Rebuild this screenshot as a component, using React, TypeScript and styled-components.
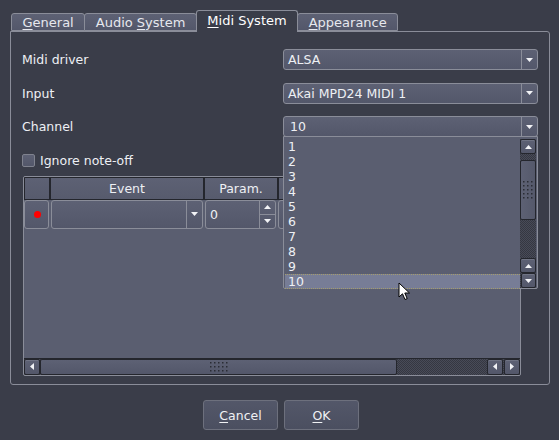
import React from "react";
import styled, { createGlobalStyle } from "styled-components";

const light = "#8a8d99";
const dark = "#24262d";
const fill = "linear-gradient(#5d6174, #53576a)";
const hatch = "repeating-conic-gradient(#484b58 0 25%, #353741 0 50%) 0 0 / 2px 2px";

const GlobalStyle = createGlobalStyle`
  html, body {
    margin: 0;
    padding: 0;
    background: #3a3d49;
  }
  body {
    font-family: "DejaVu Sans", "Liberation Sans", sans-serif;
    font-size: 12.5px;
    color: #eef0f4;
  }
`;

type Dir = "up" | "down" | "left" | "right";

const Tri = ({ dir }: { dir: Dir }) => {
  const horiz = dir === "left" || dir === "right";
  const pts = {
    down: "0,0 7,0 3.5,4",
    up: "0,4 7,4 3.5,0",
    left: "4,0 4,7 0,3.5",
    right: "0,0 0,7 4,3.5",
  }[dir];
  return (
    <svg width={horiz ? 4 : 7} height={horiz ? 7 : 4} viewBox={horiz ? "0 0 4 7" : "0 0 7 4"}>
      <polygon points={pts} fill="#f2f3f6" />
    </svg>
  );
};

const Grip = ({ cols, rows }: { cols: number; rows: number }) => (
  <svg width={cols * 4 - 2} height={rows * 4 - 2}>
    {Array.from(Array(rows).keys()).map((r) =>
      Array.from(Array(cols).keys()).map((c) => (
        <rect key={`${r}-${c}`} x={c * 4} y={r * 4} width={1.5} height={1.5} fill="#2a2c34" />
      ))
    )}
  </svg>
);

const Cursor = () => (
  <CursorWrap>
    <svg width="14" height="20" viewBox="0 0 14 20">
      <path d="M1,1 L1,15 L4.5,11.8 L7,17.5 L9.2,16.6 L6.8,11 L11.5,11 Z" fill="#fff" stroke="#000" strokeWidth="1" />
    </svg>
  </CursorWrap>
);

const channels = Array.from(Array(10).keys()).map((i) => `${i + 1}`);

export default function App() {
  return (
    <>
      <GlobalStyle />
      <Dialog>
        <TabBar>
          <Tab><span><Mn>G</Mn>eneral</span></Tab>
          <Tab><span>Audio <Mn>S</Mn>ystem</span></Tab>
          <Tab $active><span><Mn>M</Mn>idi System</span></Tab>
          <Tab><span><Mn>A</Mn>ppearance</span></Tab>
        </TabBar>

        <Panel>
          <Form>
            <Label>Midi driver</Label>
            <Combo>
              <ComboText>ALSA</ComboText>
              <ComboButton><Tri dir="down" /></ComboButton>
            </Combo>

            <Label>Input</Label>
            <Combo>
              <ComboText>Akai MPD24 MIDI 1</ComboText>
              <ComboButton><Tri dir="down" /></ComboButton>
            </Combo>

            <Label>Channel</Label>
            <Combo>
              <ComboText $indent={6}>10</ComboText>
              <ComboButton><Tri dir="down" /></ComboButton>
              <Popup>
                <List>
                  {channels.map((c) => (
                    <Item key={c} $selected={c === "10"}>{c}</Item>
                  ))}
                </List>
                <VScroll>
                  <ScrollBtn $h={15}><Tri dir="up" /></ScrollBtn>
                  <Hatch $size={6} />
                  <VThumb><Grip cols={3} rows={5} /></VThumb>
                  <Hatch />
                  <ScrollBtn $h={15}><Tri dir="up" /></ScrollBtn>
                  <ScrollBtn $h={15}><Tri dir="down" /></ScrollBtn>
                </VScroll>
              </Popup>
            </Combo>
          </Form>

          <CheckRow>
            <CheckBox />
            <span>Ignore note-off</span>
          </CheckRow>

          <Table>
            <TableHead>
              <HeadCell $w={27} $first />
              <HeadCell $w={154}>Event</HeadCell>
              <HeadCell $w={74}>Param.</HeadCell>
              <HeadCell $w={200}>Value</HeadCell>
            </TableHead>
            <TableRow>
              <RowButton><Dot /></RowButton>
              <Combo $w={152}>
                <ComboText />
                <ComboButton><Tri dir="down" /></ComboButton>
              </Combo>
              <Spin>
                <ComboText>0</ComboText>
                <SpinButtons>
                  <SpinHalf><Tri dir="up" /></SpinHalf>
                  <SpinHalf><Tri dir="down" /></SpinHalf>
                </SpinButtons>
              </Spin>
              <Combo $w={200}>
                <ComboText />
              </Combo>
            </TableRow>
            <TableSpace />
            <HScroll>
              <ScrollBtn $w={16}><Tri dir="left" /></ScrollBtn>
              <HThumb><Grip cols={5} rows={3} /></HThumb>
              <Hatch />
              <ScrollBtn $w={16}><Tri dir="left" /></ScrollBtn>
              <ScrollBtn $w={16}><Tri dir="right" /></ScrollBtn>
            </HScroll>
          </Table>
        </Panel>

        <ButtonRow>
          <Button><span><Mn>C</Mn>ancel</span></Button>
          <Button><span><Mn>O</Mn>K</span></Button>
        </ButtonRow>

        <Cursor />
      </Dialog>
    </>
  );
}

const Dialog = styled.div`
  position: relative;
  width: 559px;
  height: 440px;
  box-sizing: border-box;
  padding: 10px 9px 0 10px;
  overflow: hidden;
`;

const Mn = styled.span`
  text-decoration: underline;
  text-underline-offset: 2px;
`;

const TabBar = styled.div`
  position: relative;
  z-index: 1;
  display: flex;
  align-items: flex-end;
  height: 21px;
  padding-left: 1px;
  font-size: 13px;
`;

const Tab = styled.div<{ $active?: boolean }>`
  box-sizing: border-box;
  height: ${(p) => (p.$active ? 22 : 18)}px;
  margin-bottom: ${(p) => (p.$active ? -1 : 0)}px;
  display: flex;
  align-items: center;
  padding: 0 10.5px ${(p) => (p.$active ? 2 : 0)}px;
  border: 1px solid ${light};
  border-bottom: ${(p) => (p.$active ? "none" : `1px solid ${light}`)};
  border-radius: 3px 3px 0 0;
  background: ${(p) => (p.$active ? "#3a3d49" : fill)};
  color: ${(p) => (p.$active ? "#ffffff" : "#e6e8ee")};
  white-space: nowrap;

  & + & {
    margin-left: -1px;
  }
`;

const Panel = styled.div`
  box-sizing: border-box;
  width: 540px;
  height: 354px;
  border: 1px solid ${light};
  border-radius: 0 3px 3px 3px;
  padding: 17px 11px 0 11px;
  display: flex;
  flex-direction: column;
`;

const Form = styled.div`
  display: grid;
  grid-template-columns: 261px 255px;
  grid-template-rows: 21px 21px 21px;
  row-gap: 12.5px;
  align-items: center;
`;

const Label = styled.div`
  line-height: 21px;
`;

const Combo = styled.div<{ $w?: number }>`
  position: relative;
  box-sizing: border-box;
  ${(p) => (p.$w ? `width: ${p.$w}px; flex-shrink: 0;` : "")}
  height: 100%;
  display: flex;
  border: 1px solid ${light};
  border-radius: 3px;
  background: ${fill};
`;

const ComboText = styled.div<{ $indent?: number }>`
  flex: 1;
  display: flex;
  align-items: center;
  padding-left: ${(p) => p.$indent ?? 4}px;
  white-space: nowrap;
  overflow: hidden;
`;

const ComboButton = styled.div`
  width: 15px;
  border-left: 1px solid ${light};
  display: flex;
  align-items: center;
  justify-content: center;
`;

const Popup = styled.div`
  position: absolute;
  z-index: 5;
  top: 100%;
  left: -1px;
  width: 255px;
  height: 153px;
  box-sizing: border-box;
  border: 1px solid ${light};
  border-radius: 0 0 2px 2px;
  background: #5a5e70;
  padding: 2px 1px 0 1px;
  display: flex;
`;

const List = styled.div`
  flex: 1;
  display: flex;
  flex-direction: column;
`;

const Item = styled.div<{ $selected?: boolean }>`
  box-sizing: border-box;
  height: 15px;
  padding-left: 3px;
  display: flex;
  align-items: center;
  background: ${(p) => (p.$selected ? "#777d96" : "transparent")};
  border-top: 1px dotted ${(p) => (p.$selected ? "#a59d6c" : "transparent")};
  border-bottom: 1px dotted ${(p) => (p.$selected ? "#a59d6c" : "transparent")};
`;

const VScroll = styled.div`
  width: 16px;
  display: flex;
  flex-direction: column;
  background: ${hatch};
`;

const ScrollBtn = styled.div<{ $w?: number; $h?: number }>`
  box-sizing: border-box;
  flex-shrink: 0;
  ${(p) => (p.$w ? `width: ${p.$w}px;` : "")}
  ${(p) => (p.$h ? `height: ${p.$h}px;` : "")}
  border: 1px solid ${dark};
  border-radius: 2px;
  background: ${fill};
  box-shadow: inset 0 1px 0 rgba(255, 255, 255, 0.12);
  display: flex;
  align-items: center;
  justify-content: center;

  & + & {
    margin-left: ${(p) => (p.$w ? 1 : 0)}px;
  }
`;

const Hatch = styled.div<{ $size?: number }>`
  ${(p) => (p.$size ? `flex: 0 0 ${p.$size}px;` : "flex: 1;")}
  background: ${hatch};
`;

const VThumb = styled.div`
  box-sizing: border-box;
  height: 60px;
  flex-shrink: 0;
  border: 1px solid ${dark};
  border-radius: 2px;
  background: linear-gradient(90deg, #5d6174, #55596b);
  display: flex;
  align-items: center;
  justify-content: center;
`;

const HThumb = styled.div`
  box-sizing: border-box;
  width: 357px;
  flex-shrink: 0;
  border: 1px solid ${dark};
  border-radius: 2px;
  background: ${fill};
  display: flex;
  align-items: center;
  justify-content: center;
`;

const CheckRow = styled.div`
  display: flex;
  align-items: center;
  gap: 5px;
  height: 13px;
  margin-top: 16.5px;
`;

const CheckBox = styled.div`
  box-sizing: border-box;
  width: 13px;
  height: 13px;
  border: 1px solid #7f828e;
  border-radius: 2px;
  background: ${fill};
`;

const Table = styled.div`
  box-sizing: border-box;
  width: 498px;
  height: 200px;
  margin-top: 9px;
  margin-left: 1px;
  border: 1px solid ${light};
  border-radius: 2px;
  background: #5a5e70;
  display: flex;
  flex-direction: column;
  overflow: hidden;
`;

const TableHead = styled.div`
  box-sizing: border-box;
  display: flex;
  height: 23px;
  border-top: 1px solid ${dark};
  border-bottom: 1px solid ${dark};
`;

const HeadCell = styled.div<{ $w: number; $first?: boolean }>`
  box-sizing: border-box;
  flex-shrink: 0;
  width: ${(p) => p.$w}px;
  border-right: 2px solid ${dark};
  border-left: ${(p) => (p.$first ? `1px solid ${dark}` : "none")};
  background: linear-gradient(#5d6174, #575b6d);
  display: flex;
  align-items: center;
  justify-content: center;
`;

const TableRow = styled.div`
  display: flex;
  gap: 2px;
  height: 29px;
  margin-bottom: 1px;
`;

const RowButton = styled.div`
  box-sizing: border-box;
  width: 25px;
  flex-shrink: 0;
  border: 1px solid ${light};
  border-radius: 3px;
  background: ${fill};
  display: flex;
  align-items: center;
  justify-content: center;
`;

const Dot = styled.div`
  width: 7px;
  height: 7px;
  border-radius: 50%;
  background: #ff0000;
  margin-left: 1px;
`;

const Spin = styled(Combo)`
  width: 71px;
  flex-shrink: 0;
`;

const SpinButtons = styled.div`
  width: 15px;
  border-left: 1px solid ${light};
  display: flex;
  flex-direction: column;
`;

const SpinHalf = styled.div`
  flex: 1;
  display: flex;
  align-items: center;
  justify-content: center;

  & + & {
    border-top: 1px solid ${light};
  }
`;

const TableSpace = styled.div`
  flex: 1;
`;

const HScroll = styled.div`
  box-sizing: border-box;
  height: 17px;
  display: flex;
  border-top: 1px solid ${dark};
  background: ${hatch};
`;

const ButtonRow = styled.div`
  display: flex;
  justify-content: center;
  gap: 6px;
  margin-top: 15px;
  padding-left: 2px;
`;

const Button = styled.div`
  box-sizing: border-box;
  width: 75px;
  height: 30px;
  border: 1px solid #6d707d;
  border-radius: 3px;
  background: linear-gradient(#535769, #4b4f60);
  display: flex;
  align-items: center;
  justify-content: center;
  color: #f0f1f4;
`;

const CursorWrap = styled.div`
  position: absolute;
  left: 398px;
  top: 282px;
  z-index: 10;
  line-height: 0;
`;
